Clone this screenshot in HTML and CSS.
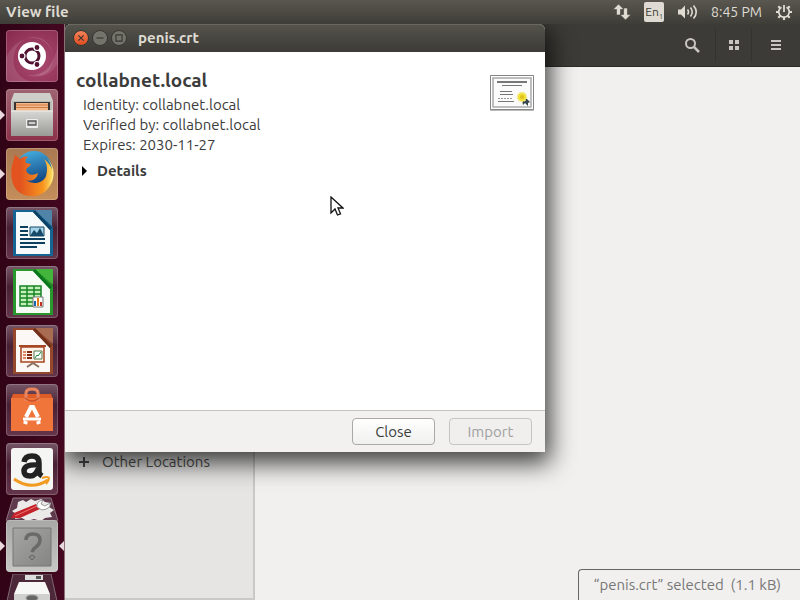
FILE: index.html
```html
<!DOCTYPE html>
<html lang="en">
<head>
<meta charset="utf-8">
<title>View file</title>
<link rel="stylesheet" href="styles.css">
</head>
<body>
<header class="panel">
  <span class="panel-title">View file</span>
  <div class="indicators">
    <svg width="18" height="18" viewBox="0 0 18 18" fill="#dfdbd2"><path d="M5.500 1L11 6.500H7.500V12H3.500V6.500H0zM12.500 17L7 11.500h3.500V5h4v6.500H18z" stroke="#45443d" stroke-width=".6"/></svg>
    <span class="keyboard">En<sub>1</sub></span>
    <svg width="21" height="18" viewBox="0 0 21 18" fill="none" stroke="#dfdbd2" stroke-width="1.600"><path d="M1 6.500h3l4-4v13l-4-4H1z" fill="#dfdbd2" stroke="none"/><path d="M10.500 6.500q2 2.500 0 5M13.500 4.500q3.500 4.500 0 9M16.500 2.500q5.500 6.500 0 13"/></svg>
    <time>8:45 PM</time>
    <svg width="18" height="18" viewBox="0 0 18 18" fill="none" stroke="#dfdbd2" stroke-width="1.800"><path d="M6.500 4.200a5.300 5.300 0 1 0 5 0M9 2v7"/><path d="M1 9h3M14 9h3M9 14v3M3.300 3.300l2 2M14.700 3.300l-2 2M3.300 14.700l2-2M14.700 14.700l-2-2" stroke-width="2.200"/></svg>
  </div>
</header>
<div class="desktop">
  <nav class="launcher" aria-label="Launcher">
    <button class="tile dash" aria-label="Dash">
      <svg viewBox="0 0 52 52"><path d="M0 28C8 8 32 0 44 18c7 12-1 26-15 27C48 50 53 20 38 10 23 1 5 14 8 35c2 9 9 15 18 17H0z" fill="#fff" opacity=".12"/><path d="M52 10c-2 25-14 36-31 35 15 5 28-3 31-13z" fill="#fff" opacity=".1"/><circle cx="26" cy="26" r="14" fill="#fff"/><circle cx="26" cy="26" r="7" fill="none" stroke="#511331" stroke-width="3"/><g stroke="#fff" stroke-width="1.200" fill="#511331"><circle cx="16" cy="26" r="3"/><circle cx="31" cy="17.500" r="3"/><circle cx="31" cy="34.500" r="3"/></g></svg>
    </button>
    <button class="tile files running" aria-label="Files">
      <svg viewBox="0 0 52 52"><defs><linearGradient id="metal" x2="0" y2="1"><stop stop-color="#d7d7d4"/><stop offset="1" stop-color="#999996"/></linearGradient></defs><path d="M8 4h36l3 8v34H5V12z" fill="#cfcfca"/><path d="M6 12h40v13H6z" fill="#bdbdb8"/><path d="M8 13h36v8H8z" fill="#3b3531"/><path d="M10 14h32v8H10z" fill="#f3b98a"/><path d="M10 16h32M10 18.500h32" stroke="#d07b42"/><path d="M5 22h42v25H5z" fill="url(#metal)"/><path d="M5 22h42" stroke="#eee"/><rect x="20" y="30" width="12" height="9" rx="1" fill="#eee"/><path d="M22 32h8v4h-8z" fill="#ccc" stroke="#555" stroke-width="1.300"/></svg>
    </button>
    <button class="tile firefox running" aria-label="Firefox">
      <svg viewBox="0 0 52 52"><defs><linearGradient id="globe" x2=".3" y2="1"><stop stop-color="#48b7e8"/><stop offset="1" stop-color="#10407d"/></linearGradient><linearGradient id="fox" x1="1" x2="0"><stop stop-color="#ffe36a"/><stop offset=".25" stop-color="#f7941d"/><stop offset=".8" stop-color="#e2531f"/></linearGradient></defs><circle cx="28" cy="21" r="18" fill="url(#globe)"/><path d="M6 17L9 7l5 4c2-2 5-3 8-2-3 2-3 4-2 6l5 1c-1 3-4 3-5 6 1 5 7 6 12 3-1 7-8 9-12 7 6 5 17 4 20-4 2-7 1-12-2-17 9 7 11 16 8 23-4 10-13 15-22 14C11 47 3 37 6 17z" fill="url(#fox)"/><path d="M40 9c9 10 8 22 1 30 9-9 9-20-1-30z" fill="#fff08a"/></svg>
    </button>
    <button class="tile doc" aria-label="Writer">
      <svg viewBox="0 0 52 52"><path d="M7 3h25l15 17v29H7z" fill="#156493"/><path d="M28 3h18v16z" fill="#4f84a8"/><path d="M10 5h17l17 18v24H10z" fill="#f7fafb"/><path d="M28 4l17 18" stroke="#0a4265" stroke-width="3"/><path d="M14 20h8M14 24h8M14 28h8M14 32h25M14 36h25M14 40h17" stroke="#0d3f60" stroke-width="2"/><path d="M24 20h14v9H24z" fill="#a5d3e9" stroke="#174a68"/><path d="M24 29l4-6 3 3 3-5 4 8z" fill="#174a68"/></svg>
    </button>
    <button class="tile doc" aria-label="Calc">
      <svg viewBox="0 0 52 52"><path d="M7 3h25l15 17v29H7z" fill="#28982d"/><path d="M29 3h18v16z" fill="#43b53a"/><path d="M10 5h17l17 18v24H10z" fill="#f7fbf5"/><path d="M28 4l17 18" stroke="#08761b" stroke-width="3"/><path d="M14 20h21v20H14zM14 24h21M14 28h21M14 32h21M14 36h21M21 20v20M28 20v20" fill="#c4efb9" stroke="#168526" stroke-width="1.500"/><path d="M27 31h10v10H27z" fill="#fff" stroke="#777"/><path d="M29 40v-5" stroke="#1762ad" stroke-width="2"/><path d="M32 40v-8" stroke="#e67a15" stroke-width="2"/><path d="M35 40v-4" stroke="#c62e1e" stroke-width="2"/></svg>
    </button>
    <button class="tile doc" aria-label="Impress">
      <svg viewBox="0 0 52 52"><path d="M7 3h25l15 17v29H7z" fill="#96482c"/><path d="M29 3h18v16z" fill="#a86c53"/><path d="M10 5h17l17 18v24H10z" fill="#fbf8f5"/><path d="M28 4l17 18" stroke="#70301b" stroke-width="3"/><path d="M15 22h23v15H15z" fill="#fff2e9" stroke="#a74725" stroke-width="1.500"/><path d="M13 21h27" stroke="#a74725" stroke-width="2"/><path d="M17 27h3M17 30h3M17 33h3" stroke="#e08763" stroke-width="2"/><path d="M21 27h5M21 30h5M21 33h5" stroke="#832a15" stroke-width="2"/><path d="M28 26h8v8h-8z" fill="#fff" stroke="#537b48"/><path d="M29 33l2-3 1 1 3-4" fill="none" stroke="#208b3b"/><path d="M27 38l-6 4M27 38l6 4" stroke="#8a6d5d" stroke-width="2"/></svg>
    </button>
    <button class="tile doc" aria-label="Ubuntu Software">
      <svg viewBox="0 0 52 52"><path d="M7 10h38l2 5v32H5V15z" fill="#dd5c28"/><path d="M5 14h42v33H5z" fill="#f0753a"/><path d="M20 17V9q0-4 6-4t6 4v8" fill="none" stroke="#e8855f" stroke-width="3"/><path d="M19 14q7 6 14 0" fill="none" stroke="#c65029" stroke-width="1.500"/><path d="M20 33l5-10h2l5 10M19 40l1-3M33 40l-1-3" fill="none" stroke="#fff" stroke-width="4"/><path d="M17 35h18" stroke="#fff" stroke-width="3"/></svg>
    </button>
    <button class="tile doc" aria-label="Amazon">
      <svg viewBox="0 0 52 52"><rect x="5" y="5" width="42" height="42" rx="3" fill="#f5f5f3"/><path d="M18 19q1-6 8-6t7 7v9q0 2 3 4M32 22q-14-1-14 6 0 5 6 5t8-7" fill="none" stroke="#222" stroke-width="5.500"/><path d="M8 36q17 12 34 1" fill="none" stroke="#f29b22" stroke-width="3"/><path d="M36 35q6-2 7 0 0 3-3 6" fill="none" stroke="#f29b22" stroke-width="2"/></svg>
    </button>
    <button class="folded" aria-label="System Settings">
      <svg viewBox="0 0 52 24"><path d="M7 1h38l7 23H0z" fill="#5e3a4c" stroke="#8f7280"/><path d="M12 5l5-2 3 2 5-3 4 2 6-2 4 3 6 1-2 4 5 3-4 3 2 4-7 1-4 3-7-2-7 2-5-3-7 1 1-5-4-3 5-3z" fill="#eceae8"/><path d="M5 21l3-5 22-9 4 5-20 9z" fill="#c4222a"/><path d="M9 19L31 9" stroke="#ed7470"/><path d="M31 10q-1-6 6-7l-2 4 4 2 5-3q1 6-8 7z" fill="#fff" stroke="#999"/></svg>
    </button>
    <button class="tile unknown running active" aria-label="View file">
      <svg viewBox="0 0 52 52"><defs><linearGradient id="grey" x2="1" y2="1"><stop stop-color="#a5a5a3"/><stop offset="1" stop-color="#858583"/></linearGradient></defs><path d="M7 8h38v38H7z" fill="url(#grey)" stroke="#777775"/><path d="M20 20q0-6 7-6t7 6q0 4-4 7-3 2-4 5" fill="none" stroke="#6a6a68" stroke-width="3.500"/><path d="M26 35l3 2-3 3-3-3z" fill="#8d8d8b" stroke="#626260"/></svg>
    </button>
    <button class="folded" aria-label="Disk">
      <svg viewBox="0 0 52 27"><path d="M7 0h38l6 27H1z" fill="#4c2838" stroke="#806874"/><path d="M19 1h18v5H19z" fill="#ddd"/><path d="M30 2h5v3h-5z" fill="#555"/><path d="M13 8h26l5 12v7H8v-7z" fill="#f7f7f5"/><path d="M8 20h36v7H8z" fill="#d0d0ce"/><ellipse cx="26" cy="24" rx="6" ry="3" fill="#666" stroke="#999"/></svg>
    </button>
  </nav>
  <main class="files-window">
    <div class="toolbar">
      <button aria-label="Search"><svg width="16" height="16" viewBox="0 0 16 16" fill="none" stroke="#c9c6c1" stroke-width="2"><circle cx="6.500" cy="6.500" r="4.500"/><path d="M10 10l5 5" stroke-width="2.500"/></svg></button>
      <button class="framed" aria-label="Grid view"><svg width="16" height="16" viewBox="0 0 16 16" fill="#c9c6c1"><path d="M3 3h4v4H3zM9 3h4v4H9zM3 9h4v4H3zM9 9h4v4H9z"/></svg></button>
      <button aria-label="Menu"><svg width="16" height="16" viewBox="0 0 16 16" fill="#c9c6c1"><path d="M3 3h10v2H3zM3 7h10v2H3zM3 11h10v2H3z"/></svg></button>
    </div>
    <div class="files-body">
      <aside class="places"><a href="#locations"><svg width="12" height="12" viewBox="0 0 12 12" stroke="#4c4c4c" stroke-width="2"><path d="M6 1v10M1 6h10"/></svg>Other Locations</a></aside>
      <section class="listing" aria-label="Files"></section>
    </div>
    <p class="status">“penis.crt” selected&nbsp; (1.1 kB)</p>
  </main>
  <section class="dialog" role="dialog" aria-labelledby="dialog-title">
    <header class="titlebar">
      <button class="control close" aria-label="Close window"><svg viewBox="0 0 16 16"><path d="M5 5l6 6M11 5l-6 6"/></svg></button>
      <button class="control" aria-label="Minimize"><svg viewBox="0 0 16 16"><path d="M4 8h8"/></svg></button>
      <button class="control" aria-label="Maximize"><svg viewBox="0 0 16 16"><path d="M4.500 4.500h7v7h-7z"/></svg></button>
      <h1 id="dialog-title">penis.crt</h1>
    </header>
    <div class="certificate">
      <div class="summary">
        <h2>collabnet.local</h2>
        <p>Identity: collabnet.local</p>
        <p>Verified by: collabnet.local</p>
        <p>Expires: 2030-11-27</p>
        <button class="details"><svg width="6" height="10" viewBox="0 0 6 10"><path d="M0 0l5 5-5 5z"/></svg>Details</button>
      </div>
      <svg class="seal" width="46" height="38" viewBox="0 0 46 38"><path d="M1.500 1.500h43v34h-43z" fill="#fff" stroke="#858585"/><path d="M4 4h38v29H4z" fill="#fbfbfb" stroke="#aaa" stroke-width="1.500"/><path d="M1 36.500h44" stroke="#bbb"/><path d="M8 8h30" stroke="#777" stroke-width="2"/><path d="M13 11.500h20M11 17.500h12M11 20.500h13M9 27.500h16" stroke="#777"/><path d="M9 24.500h15" stroke="#999" stroke-dasharray="2 1"/><path d="M33 26l1 5 2-2 3 3v-3l2-1-4-4z" fill="#354550"/><circle cx="33" cy="23" r="4.500" fill="#f1df35" stroke="#f6eb83" stroke-width="1.500" stroke-dasharray="2 1"/><circle cx="33" cy="23" r="2" fill="#dfc11d"/></svg>
    </div>
    <footer class="actions"><button>Close</button><button disabled>Import</button></footer>
  </section>
  <svg class="pointer" width="14" height="21" viewBox="0 0 14 21"><path d="M1 1v16l4-4 2.500 6 3-1.200L8 12h5z" fill="#fff" stroke="#111" stroke-width="1.300"/></svg>
</div>
</body>
</html>
```
FILE: styles.css
```css
* { box-sizing: border-box; }
body {
  margin: 0;
  height: 100vh;
  display: flex;
  flex-direction: column;
  overflow: hidden;
  font: 15px/20px "Ubuntu", "Noto Sans", sans-serif;
  color: #3c3c3c;
}
h1, h2, p { margin: 0; }
button { font: inherit; color: inherit; padding: 0; border: 0; background: none; }
svg { display: block; }

.panel {
  height: 24px;
  flex: none;
  display: flex;
  align-items: center;
  justify-content: space-between;
  padding: 0 7px 0 6px;
  background: linear-gradient(#59574f, #3e3d38);
  color: #dfdbd2;
}
.panel-title { font-weight: bold; }
.indicators { display: flex; align-items: center; gap: 13px; font-size: 14px; }
.keyboard {
  width: 20px;
  height: 20px;
  border-radius: 2px;
  background: #dfdbd2;
  color: #3c3b37;
  font-size: 12px;
  text-align: center;
  white-space: nowrap;
}
.keyboard sub { font-size: 7px; line-height: 0; }

.desktop { position: relative; flex: 1; min-height: 0; display: flex; }
.launcher {
  width: 65px;
  flex: none;
  display: flex;
  flex-direction: column;
  align-items: flex-start;
  gap: 7px;
  padding: 6px 6px 0;
  background: linear-gradient(90deg, #300315, #44081f);
  border-right: 1px solid #8b7078;
}
.tile {
  position: relative;
  width: 52px;
  height: 52px;
  flex: none;
  border-radius: 4px;
  box-shadow: inset 0 0 0 1px rgba(255, 255, 255, .2);
}
.dash { background: radial-gradient(circle at 60% 60%, #ad4a72, #86294c); }
.files { background: linear-gradient(#9e6472, #8d304a); }
.firefox { background: linear-gradient(#a97952, #c58e5b); }
.doc { background: linear-gradient(#765668, #482033 40%, #65364b); }
.unknown { margin-top: -8px; background: linear-gradient(#a8a8a6, #c7c7c5); }
.folded { width: 52px; flex: none; margin-top: -5px; }
.running::before, .active::after {
  content: "";
  position: absolute;
  top: 21px;
  left: -6px;
  border: 5px solid transparent;
  border-left-color: #e9d9df;
  border-right-width: 0;
}
.active::after {
  left: auto;
  right: -6px;
  border-width: 5px 5px 5px 0;
  border-right-color: #e9d9df;
}

.files-window { position: relative; flex: 1; display: flex; flex-direction: column; background: #f1f0ef; }
.toolbar {
  height: 43px;
  flex: none;
  display: flex;
  align-items: center;
  justify-content: flex-end;
  gap: 5px;
  padding: 0 6px;
  background: #3c3b37;
  border-bottom: 1px solid #2d2c29;
}
.toolbar button { width: 37px; height: 34px; display: grid; place-items: center; }
.toolbar .framed { border: 1px solid #34332f; border-width: 0 1px; }
.files-body { flex: 1; display: flex; }
.places {
  width: 190px;
  padding: 385px 13px 0;
  background: #e6e5e4;
  border-right: 2px solid #cac9c8;
  border-bottom: 2px solid #cac9c8;
}
.places a { display: flex; align-items: center; gap: 12px; color: #505050; text-decoration: none; white-space: nowrap; }
.listing { flex: 1; }
.status {
  position: absolute;
  right: 0;
  bottom: 0;
  padding: 5px 19px 5px 14px;
  border: 1px solid #666;
  border-width: 1px 0 0 1px;
  border-radius: 4px 0 0 0;
  color: #777;
  background: #f1f0ef;
}

.dialog {
  position: absolute;
  left: 65px;
  top: 0;
  width: 60%;
  display: flex;
  flex-direction: column;
  border-radius: 6px 6px 0 0;
  background: #f2f1f0;
  box-shadow: 2px 8px 24px 3px rgba(0, 0, 0, .75);
  clip-path: inset(0 -60px -60px 0);
}
.titlebar {
  height: 28px;
  display: flex;
  align-items: center;
  gap: 3px;
  padding: 0 8px;
  border-radius: 6px 6px 0 0;
  background: linear-gradient(#54534c, #3c3b37);
  box-shadow: inset 0 1px #69675f;
}
.titlebar h1 { margin-left: 8px; font-size: 15px; line-height: 20px; color: #dfdbd2; }
.control { width: 16px; height: 16px; border-radius: 50%; background: #74736c; border: 1px solid #373631; }
.control path { fill: none; stroke: #373631; stroke-width: 1.300; }
.close { background: linear-gradient(#f58359, #df4c20); }
.certificate {
  min-height: 358px;
  display: flex;
  justify-content: space-between;
  align-items: flex-start;
  padding: 15px 10px;
  background: #fff;
}
.summary p { padding-left: 8px; }
.summary h2 { padding-left: 1px; margin-bottom: 2px; font-size: 19px; line-height: 26px; }
.details { display: flex; align-items: center; gap: 9px; padding: 6px 7px; font-weight: bold; }
.seal { margin-top: 7px; }
.actions {
  display: flex;
  justify-content: flex-end;
  gap: 14px;
  padding: 7px 13px;
  border-top: 1px solid #c3c2c1;
}
.actions button {
  width: 83px;
  height: 27px;
  border: 1px solid #aaa9a7;
  border-radius: 4px;
  background: linear-gradient(#fff, #f0f0ef);
}
.actions button:disabled { color: #a0a0a0; border-color: #c5c5c3; background: #f0efee; }
.pointer { position: absolute; left: 330px; top: 172px; }
```
